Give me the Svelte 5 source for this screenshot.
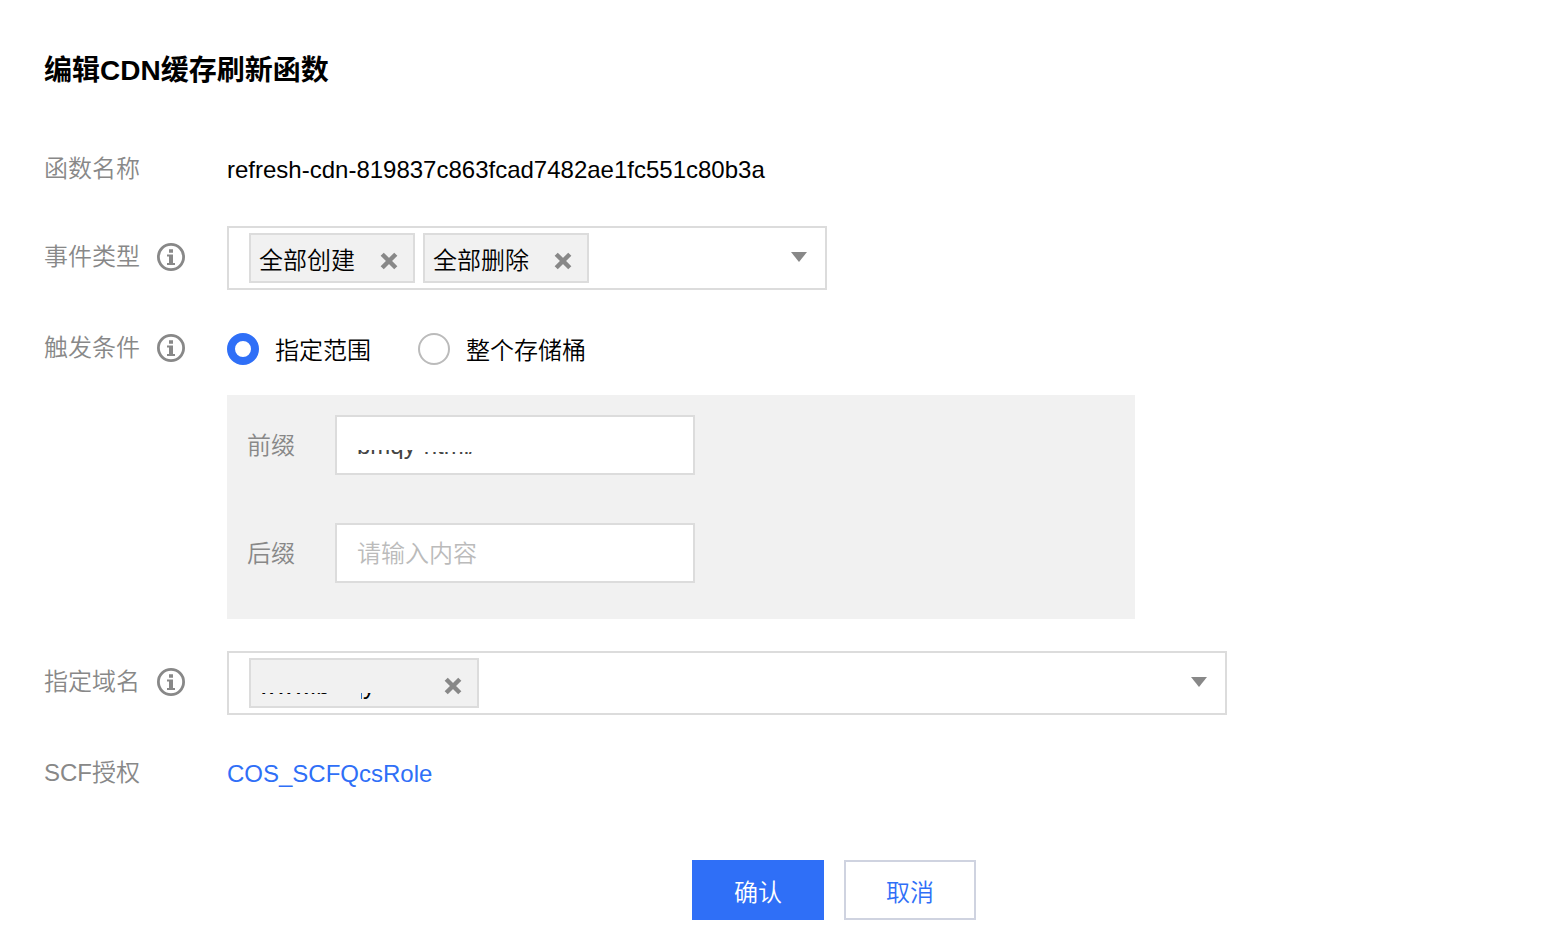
<script>
	let events = $state(['全部创建', '全部删除']);
	let domains = $state(['www.bmqy.net']);
	let scope = $state('range');
	let prefix = $state('bmqy-html/');
	let suffix = $state('');

	function removeEvent(name) {
		events = events.filter((item) => item !== name);
	}

	function removeDomain(name) {
		domains = domains.filter((item) => item !== name);
	}
</script>

{#snippet infoIcon()}
	<svg class="info" width="28" height="28" viewBox="0 0 28 28" aria-hidden="true">
		<circle cx="14" cy="14" r="12.6" fill="none" stroke="#888" stroke-width="2.8" />
		<path d="M12 6.2h4v3.6h-4zM10 11.4h6V20h2v2h-8v-2h2v-6.6h-2z" fill="#888" />
	</svg>
{/snippet}

{#snippet closeIcon()}
	<svg width="18" height="18" viewBox="0 0 18 18" aria-hidden="true">
		<path d="M2.2 2.2l13.6 13.6M15.8 2.2L2.2 15.8" stroke="#888" stroke-width="4.4" />
	</svg>
{/snippet}

{#snippet arrowIcon()}
	<svg width="16" height="10" viewBox="0 0 16 10" aria-hidden="true">
		<path d="M0 0h16L8 10z" fill="#888" />
	</svg>
{/snippet}

<form class="page" onsubmit={(e) => e.preventDefault()}>
	<h1>编辑CDN缓存刷新函数</h1>

	<div class="row name-row">
		<div class="label">函数名称</div>
		<div class="value text">refresh-cdn-819837c863fcad7482ae1fc551c80b3a</div>
	</div>

	<div class="row">
		<div class="label" id="event-label">事件类型 {@render infoIcon()}</div>
		<div class="value">
			<div class="picker events" role="group" aria-labelledby="event-label">
				{#each events as name}
					<span class="tag">
						<span>{name}</span>
						<button type="button" class="remove" aria-label="移除 {name}" onclick={() => removeEvent(name)}>
							{@render closeIcon()}
						</button>
					</span>
				{/each}
				<button type="button" class="arrow" aria-label="展开事件类型">{@render arrowIcon()}</button>
			</div>
		</div>
	</div>

	<div class="row">
		<div class="label" id="scope-label">触发条件 {@render infoIcon()}</div>
		<div class="value">
			<div class="radios" role="radiogroup" aria-labelledby="scope-label">
				<label>
					<input type="radio" name="scope" value="range" bind:group={scope} />
					<span>指定范围</span>
				</label>
				<label>
					<input type="radio" name="scope" value="bucket" bind:group={scope} />
					<span>整个存储桶</span>
				</label>
			</div>
			{#if scope === 'range'}
				<div class="panel">
					<div class="field">
						<label for="prefix">前缀</label>
						<div class="input-wrap">
							<input id="prefix" type="text" bind:value={prefix} />
							<span class="cover cover-head"></span>
							<span class="cover cover-tail"></span>
						</div>
					</div>
					<div class="field">
						<label for="suffix">后缀</label>
						<div class="input-wrap">
							<input id="suffix" type="text" placeholder="请输入内容" bind:value={suffix} />
						</div>
					</div>
				</div>
			{/if}
		</div>
	</div>

	<div class="row">
		<div class="label" id="domain-label">指定域名 {@render infoIcon()}</div>
		<div class="value">
			<div class="picker domains" role="group" aria-labelledby="domain-label">
				{#each domains as name}
					<span class="tag domain">
						<span>{name}</span>
						<span class="cover cover-top"></span>
						<span class="cover cover-mid"></span>
						<span class="cover cover-end"></span>
						<button type="button" class="remove" aria-label="移除域名" onclick={() => removeDomain(name)}>
							{@render closeIcon()}
						</button>
					</span>
				{/each}
				<button type="button" class="arrow" aria-label="展开指定域名">{@render arrowIcon()}</button>
			</div>
		</div>
	</div>

	<div class="row">
		<div class="label">SCF授权</div>
		<div class="value text"><a href="#role">COS_SCFQcsRole</a></div>
	</div>

	<div class="actions">
		<button type="submit" class="btn primary">确认</button>
		<button type="button" class="btn">取消</button>
	</div>
</form>

<style>
	:global(body) {
		margin: 0;
		background: #fff;
	}

	.page {
		padding: 51px 44px 22px;
		font-family: 'Liberation Sans', 'Noto Sans CJK SC', sans-serif;
		font-size: 24px;
		font-weight: 350;
		color: #000;
	}

	.page * {
		box-sizing: border-box;
	}

	button,
	input {
		font: inherit;
	}

	h1 {
		margin: 0 0 47px;
		font-size: 28px;
		line-height: 40px;
		font-weight: bold;
	}

	.row {
		display: flex;
		align-items: flex-start;
		margin-bottom: 27px;
	}

	.name-row {
		margin-bottom: 24px;
	}

	.label {
		flex: none;
		display: flex;
		align-items: center;
		gap: 17px;
		width: 183px;
		height: 61px;
		line-height: 61px;
		color: #888;
	}

	.info {
		flex: none;
	}

	.value {
		flex: 1;
		min-width: 0;
	}

	.text {
		line-height: 64px;
	}

	a {
		color: #2f6ff7;
		text-decoration: none;
	}

	.picker {
		display: flex;
		align-items: center;
		gap: 8px;
		height: 64px;
		padding: 0 18px 0 20px;
		border: 2px solid #dcdcdc;
	}

	.events {
		max-width: 600px;
	}

	.domains {
		max-width: 1000px;
	}

	.tag {
		position: relative;
		display: flex;
		align-items: center;
		justify-content: space-between;
		min-width: 166px;
		height: 50px;
		padding: 6px 15px 0 8px;
		border: 2px solid #dcdcdc;
		background: #f1f1f1;
		line-height: 40px;
	}

	.domain {
		width: 230px;
	}

	.remove,
	.arrow {
		display: flex;
		padding: 0;
		border: none;
		background: none;
		cursor: pointer;
	}

	.arrow {
		margin-left: auto;
		padding-bottom: 2px;
	}

	.radios {
		display: flex;
		align-items: center;
		gap: 47px;
		height: 64px;
	}

	.radios label {
		display: flex;
		align-items: center;
		gap: 16px;
		line-height: 36px;
	}

	.radios span {
		padding-top: 4px;
	}

	.radios input {
		appearance: none;
		width: 32px;
		height: 32px;
		margin: 0;
		border: 2px solid #bbb;
		border-radius: 50%;
		background: #fff;
	}

	.radios input:checked {
		border: 8px solid #2f6ff7;
	}

	.panel {
		display: flex;
		flex-direction: column;
		gap: 48px;
		max-width: 908px;
		margin: 14px 0 5px;
		padding: 20px 20px 36px;
		background: #f1f1f1;
	}

	.field {
		display: flex;
		align-items: center;
		color: #888;
	}

	.field label {
		width: 88px;
		padding-top: 2px;
		line-height: 32px;
	}

	.input-wrap {
		position: relative;
		width: 360px;
	}

	.input-wrap input {
		display: block;
		width: 100%;
		height: 60px;
		padding: 2px 20px 0;
		border: 2px solid #dcdcdc;
		border-radius: 0;
		background: #fff;
		color: #444;
	}

	.input-wrap input::placeholder {
		color: #bbb;
	}

	/* strips that hide the private part of a value */
	.cover {
		position: absolute;
		pointer-events: none;
	}

	.cover-head {
		top: 12px;
		left: 20px;
		width: 62px;
		height: 23px;
		background: #fff;
	}

	.cover-tail {
		top: 12px;
		left: 82px;
		width: 80px;
		height: 25px;
		background: #fff;
	}

	.cover-top {
		top: 8px;
		left: 4px;
		width: 160px;
		height: 25px;
		background: #f1f1f1;
	}

	.cover-mid {
		top: 30px;
		left: 76px;
		width: 34px;
		height: 12px;
		background: #f1f1f1;
	}

	.cover-end {
		top: 30px;
		left: 124px;
		width: 40px;
		height: 12px;
		background: #f1f1f1;
	}

	.actions {
		display: flex;
		justify-content: center;
		gap: 20px;
		margin-top: 54px;
		padding-left: 122px;
	}

	.btn {
		width: 132px;
		height: 60px;
		padding: 0;
		border: 2px solid #cfd3e0;
		background: #fff;
		color: #2f6ff7;
		cursor: pointer;
	}

	.primary {
		border-color: #2f6ff7;
		background: #2f6ff7;
		color: #fff;
	}
</style>
